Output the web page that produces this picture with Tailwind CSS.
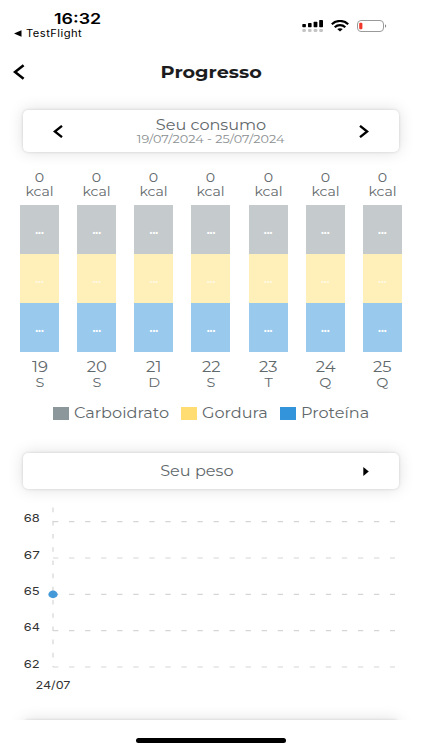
<!DOCTYPE html>
<html lang="pt-BR">
<head>
  <meta charset="UTF-8">
  <meta name="viewport" content="width=device-width, initial-scale=1.0">
  <title>Progresso</title>
  <script src="https://cdn.jsdelivr.net/npm/@tailwindcss/browser@4"></script>
</head>
<body class="bg-white font-['Montserrat','Inter',sans-serif] text-[#5f686b]">
  <div class="w-[422px] h-[750px] flex flex-col overflow-hidden">

    <!-- Status bar -->
    <div class="h-12 shrink-0 flex justify-between text-black font-['Inter',sans-serif]">
      <div class="pl-[14px] pt-[11px]">
        <div class="pl-[40px] h-4 text-[15px] leading-4 font-semibold"><span class="inline-block origin-left scale-x-[1.19]">16:32</span></div>
        <div class="flex items-center h-3">
          <svg class="w-2 h-[7px]" viewBox="0 0 8 7"><path d="M0 3.5 7.5 .3v6.4z"/></svg>
          <span class="ml-[4px] inline-block origin-left scale-x-[1.12] text-[10px] leading-3 tracking-[.4px]">TestFlight</span>
        </div>
      </div>
      <div class="flex items-start pt-5 pr-[35px]">
        <svg class="w-[22px] h-3" viewBox="0 0 22 12">
          <rect x=".3" y="4" width="3.6" height="3.2" rx=".7"/>
          <rect x="6" y="3" width="3.6" height="4.2" rx=".7"/>
          <rect x="11.6" y="1.7" width="3.8" height="5.5" rx=".7"/>
          <rect x="17.2" y="0" width="3.8" height="7.2" rx=".7"/>
          <g fill="#c4c4c4">
            <rect x=".3" y="9" width="3.6" height="3" rx="1.2"/>
            <rect x="6" y="9" width="3.6" height="3" rx="1.2"/>
            <rect x="11.6" y="9" width="3.8" height="3" rx="1.2"/>
            <rect x="17.2" y="9" width="3.8" height="3" rx="1.2"/>
          </g>
        </svg>
        <svg class="w-[18px] h-3 ml-[7px]" viewBox="0 0 18 12" fill="none" stroke="#000" stroke-width="2.2">
          <path d="M.8 4.2C5.3-.1 12.7-.1 17.2 4.2"/>
          <path d="M3.7 7.2c2.9-2.7 7.7-2.7 10.6 0"/>
          <path d="M6.2 9.1c1.6-1.2 4-1.2 5.6 0L9 11.5z" fill="#000" stroke="none"/>
        </svg>
        <svg class="w-[30px] h-3 ml-2" viewBox="0 0 30 12">
          <rect x=".5" y=".5" width="26" height="11" rx="3.5" fill="none" stroke="#9a9a9a"/>
          <rect x="2.2" y="2.7" width="3.2" height="6.6" rx="1" fill="#f0372c"/>
          <path d="M28 4.3c1.6.5 1.6 2.9 0 3.4z" fill="#8a8a8a"/>
        </svg>
      </div>
    </div>

    <!-- Header -->
    <div class="h-12 shrink-0 flex items-center pl-[13px] pr-[25px]">
      <svg class="w-3 h-4" viewBox="0 0 12 16" fill="none" stroke="#000" stroke-width="2.6"><path d="M10.6 1.2 2 8l8.6 6.8"/></svg>
      <h1 class="flex-1 pt-px text-center text-[16px] font-bold text-[#1c1c1e]"><span class="inline-block scale-x-[1.2]">Progresso</span></h1>
    </div>

    <div class="h-[624px] shrink-0 overflow-hidden">
      <!-- Consumo -->
      <div class="mt-[14px] mx-[23px] h-[42px] rounded-[5px] bg-white shadow-[0_0_3px_rgba(0,0,0,.15),0_0_16px_rgba(0,0,0,.13)] flex items-center justify-between px-[30px]">
        <svg class="w-[10px] h-[13px]" viewBox="0 0 10 13" fill="none" stroke="#000" stroke-width="2.4"><path d="M9 .9 1.8 6.5 9 12.1"/></svg>
        <div class="text-center">
          <div class="text-[14px] leading-4"><span class="inline-block scale-x-[1.15]">Seu consumo</span></div>
          <div class="text-[11px] leading-[13px] text-[#8b8f91]"><span class="inline-block scale-x-[1.16]">19/07/2024 - 25/07/2024</span></div>
        </div>
        <svg class="w-[10px] h-[13px]" viewBox="0 0 10 13" fill="none" stroke="#000" stroke-width="2.4"><path d="M1 .9 8.2 6.5 1 12.1"/></svg>
      </div>

      <div id="days" class="mt-[19px] ml-[11px] w-[400px] grid grid-cols-7 text-center"></div>

      <div class="mt-[15px] ml-[53px] flex items-center h-4 text-[14px]">
        <i class="w-4 h-[13px] bg-[#8c979b]"></i><span class="w-[107px] ml-[5px] origin-left scale-x-[1.15]">Carboidrato</span>
        <i class="w-4 h-[13px] bg-[#ffdd72]"></i><span class="w-[77px] ml-[5px] origin-left scale-x-[1.15]">Gordura</span>
        <i class="w-4 h-[13px] ml-px bg-[#3393db]"></i><span class="ml-[5px] origin-left scale-x-[1.15]">Proteína</span>
      </div>

      <!-- Peso -->
      <div class="mt-8 mx-[23px] h-9 rounded-[5px] bg-white shadow-[0_0_3px_rgba(0,0,0,.15),0_0_16px_rgba(0,0,0,.13)] flex items-center pl-[8px] pr-[30px]">
        <div class="flex-1 pt-px text-center text-[14px]"><span class="inline-block scale-x-[1.15]">Seu peso</span></div>
        <svg class="w-[6px] h-[9px]" viewBox="0 0 6 9"><path d="M.3 0 5.8 4.5.3 9z"/></svg>
      </div>

      <svg class="block w-[422px] h-[216px] mt-[3px] font-['Inter',sans-serif]" viewBox="0 492 422 216">
        <g id="grid" stroke="#d5d5d5" stroke-width="1.2" fill="none"></g>
        <ellipse cx="53" cy="594.4" rx="4.6" ry="3.8" fill="#4499d9"/>
        <g id="ticks" fill="#333" font-size="11" text-anchor="end"></g>
        <text x="53" y="688.6" fill="#333" font-size="11" text-anchor="middle" textLength="35" lengthAdjust="spacingAndGlyphs">24/07</text>
      </svg>

      <!-- Next card, cut by the bottom of the list -->
      <div class="mt-3 mx-[23px] h-9 rounded-[5px] bg-white shadow-[0_0_3px_rgba(0,0,0,.15),0_0_16px_rgba(0,0,0,.13)]"></div>
    </div>

    <!-- Home indicator -->
    <div class="mt-[18px] mx-auto w-[150px] h-[5px] shrink-0 rounded-full bg-black"></div>
  </div>

  <script>
    const days = [["19", "S"], ["20", "S"], ["21", "D"], ["22", "S"], ["23", "T"], ["24", "Q"], ["25", "Q"]];

    document.getElementById("days").innerHTML = days.map(([day, letter]) => `
      <div class="flex flex-col items-center">
        <div class="text-[12.5px] leading-[14px] scale-x-[1.13]">0<br>kcal</div>
        <div class="mt-[6px] w-[39px] h-[147px] grid grid-rows-3 text-white text-[11px] font-bold">
          <div class="bg-[#c5cacd] flex items-center justify-center pt-px">...</div>
          <div class="bg-[#ffefb9] flex items-center justify-center pt-px text-white/60">...</div>
          <div class="bg-[#99c9ed] flex items-center justify-center pt-px">...</div>
        </div>
        <div class="mt-[6px] text-[14.5px] leading-[18px] scale-x-[1.13]">${day}</div>
        <div class="text-[12.5px] leading-[14px] scale-x-[1.15]">${letter}</div>
      </div>`).join("");

    const rows = [[68, 521.6], [67, 558], [65, 594.4], [64, 630.6], [62, 667]];
    document.getElementById("grid").innerHTML =
      '<path d="M53 507.6V667" stroke-dasharray="4.6 8.6"/>' +
      rows.map(r => `<path d="M53 ${r[1]}H395" stroke-dasharray="5.3 10.75"/>`).join("");
    document.getElementById("ticks").innerHTML =
      rows.map(r => `<text x="39.8" y="${r[1] + 0.6}" textLength="16" lengthAdjust="spacingAndGlyphs">${r[0]}</text>`).join("");
  </script>
</body>
</html>
